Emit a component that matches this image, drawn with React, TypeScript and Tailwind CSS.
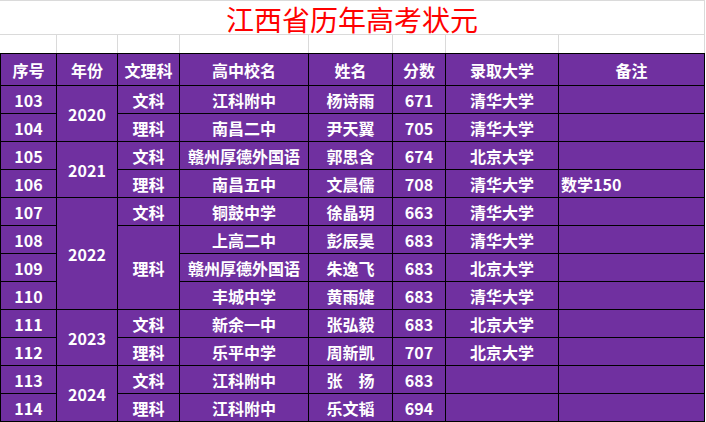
type Row = {
  no: string;
  year?: string;
  yearSpan?: number;
  subject?: string;
  subjectSpan?: number;
  school: string;
  name: string;
  score: string;
  univ: string;
  note?: string;
};

const rows: Row[] = [
  { no: '103', year: '2020', yearSpan: 2, subject: '文科', school: '江科附中', name: '杨诗雨', score: '671', univ: '清华大学' },
  { no: '104', subject: '理科', school: '南昌二中', name: '尹天翼', score: '705', univ: '清华大学' },
  { no: '105', year: '2021', yearSpan: 2, subject: '文科', school: '赣州厚德外国语', name: '郭思含', score: '674', univ: '北京大学' },
  { no: '106', subject: '理科', school: '南昌五中', name: '文晨儒', score: '708', univ: '清华大学', note: '数学150' },
  { no: '107', year: '2022', yearSpan: 4, subject: '文科', school: '铜鼓中学', name: '徐晶玥', score: '663', univ: '清华大学' },
  { no: '108', subject: '理科', subjectSpan: 3, school: '上高二中', name: '彭辰昊', score: '683', univ: '清华大学' },
  { no: '109', school: '赣州厚德外国语', name: '朱逸飞', score: '683', univ: '北京大学' },
  { no: '110', school: '丰城中学', name: '黄雨婕', score: '683', univ: '清华大学' },
  { no: '111', year: '2023', yearSpan: 2, subject: '文科', school: '新余一中', name: '张弘毅', score: '683', univ: '北京大学' },
  { no: '112', subject: '理科', school: '乐平中学', name: '周新凯', score: '707', univ: '北京大学' },
  { no: '113', year: '2024', yearSpan: 2, subject: '文科', school: '江科附中', name: '张\u3000扬', score: '683', univ: '' },
  { no: '114', subject: '理科', school: '江科附中', name: '乐文韬', score: '694', univ: '' },
];

const headers = ['序号', '年份', '文理科', '高中校名', '姓名', '分数', '录取大学', '备注'];
const gridWidths = ['w-[57px]', 'w-[61px]', 'w-[62px]', 'w-[129px]', 'w-[84px]', 'w-[53px]', 'w-[113px]', 'w-[146px]'];

const spanClass = (n?: number) => {
  if (n === 2) return 'row-span-2';
  if (n === 3) return 'row-span-3';
  if (n === 4) return 'row-span-4';
  return '';
};

const Cell = ({ children, className = '' }: { children?: React.ReactNode; className?: string }) => (
  <div className={`flex items-center justify-center bg-[#7030a0] pt-px text-white ${className}`}>{children}</div>
);

export default function App() {
  return (
    <div className="h-[422px] w-[706px] bg-white font-['Noto_Sans_CJK_SC',sans-serif] font-bold leading-none">
      <div className="flex h-[35px] w-[705px] items-center justify-center border-y border-r border-[#dadada] pt-[3px] text-[28px] font-normal text-[#ff0000]">
        江西省历年高考状元
      </div>
      <div className="flex h-[18px]">
        {gridWidths.map(w => (
          <div key={w} className={`${w} border-r border-[#dadada]`} />
        ))}
      </div>
      <div className="grid w-[705px] grid-cols-[55px_60px_61px_128px_83px_52px_112px_145px] grid-rows-[31px_repeat(12,27px)] gap-px bg-black p-px text-[16px]">
        {headers.map(h => (
          <Cell key={h} className="text-[#ffff00]">{h}</Cell>
        ))}
        {rows.map(r => (
          <>
            <Cell key={r.no + 'n'}>{r.no}</Cell>
            {r.year && <Cell className={spanClass(r.yearSpan)}>{r.year}</Cell>}
            {r.subject && <Cell className={spanClass(r.subjectSpan)}>{r.subject}</Cell>}
            <Cell>{r.school}</Cell>
            <Cell>{r.name}</Cell>
            <Cell>{r.score}</Cell>
            <Cell>{r.univ}</Cell>
            <Cell className="justify-start pl-[2px]">{r.note}</Cell>
          </>
        ))}
      </div>
    </div>
  );
}
